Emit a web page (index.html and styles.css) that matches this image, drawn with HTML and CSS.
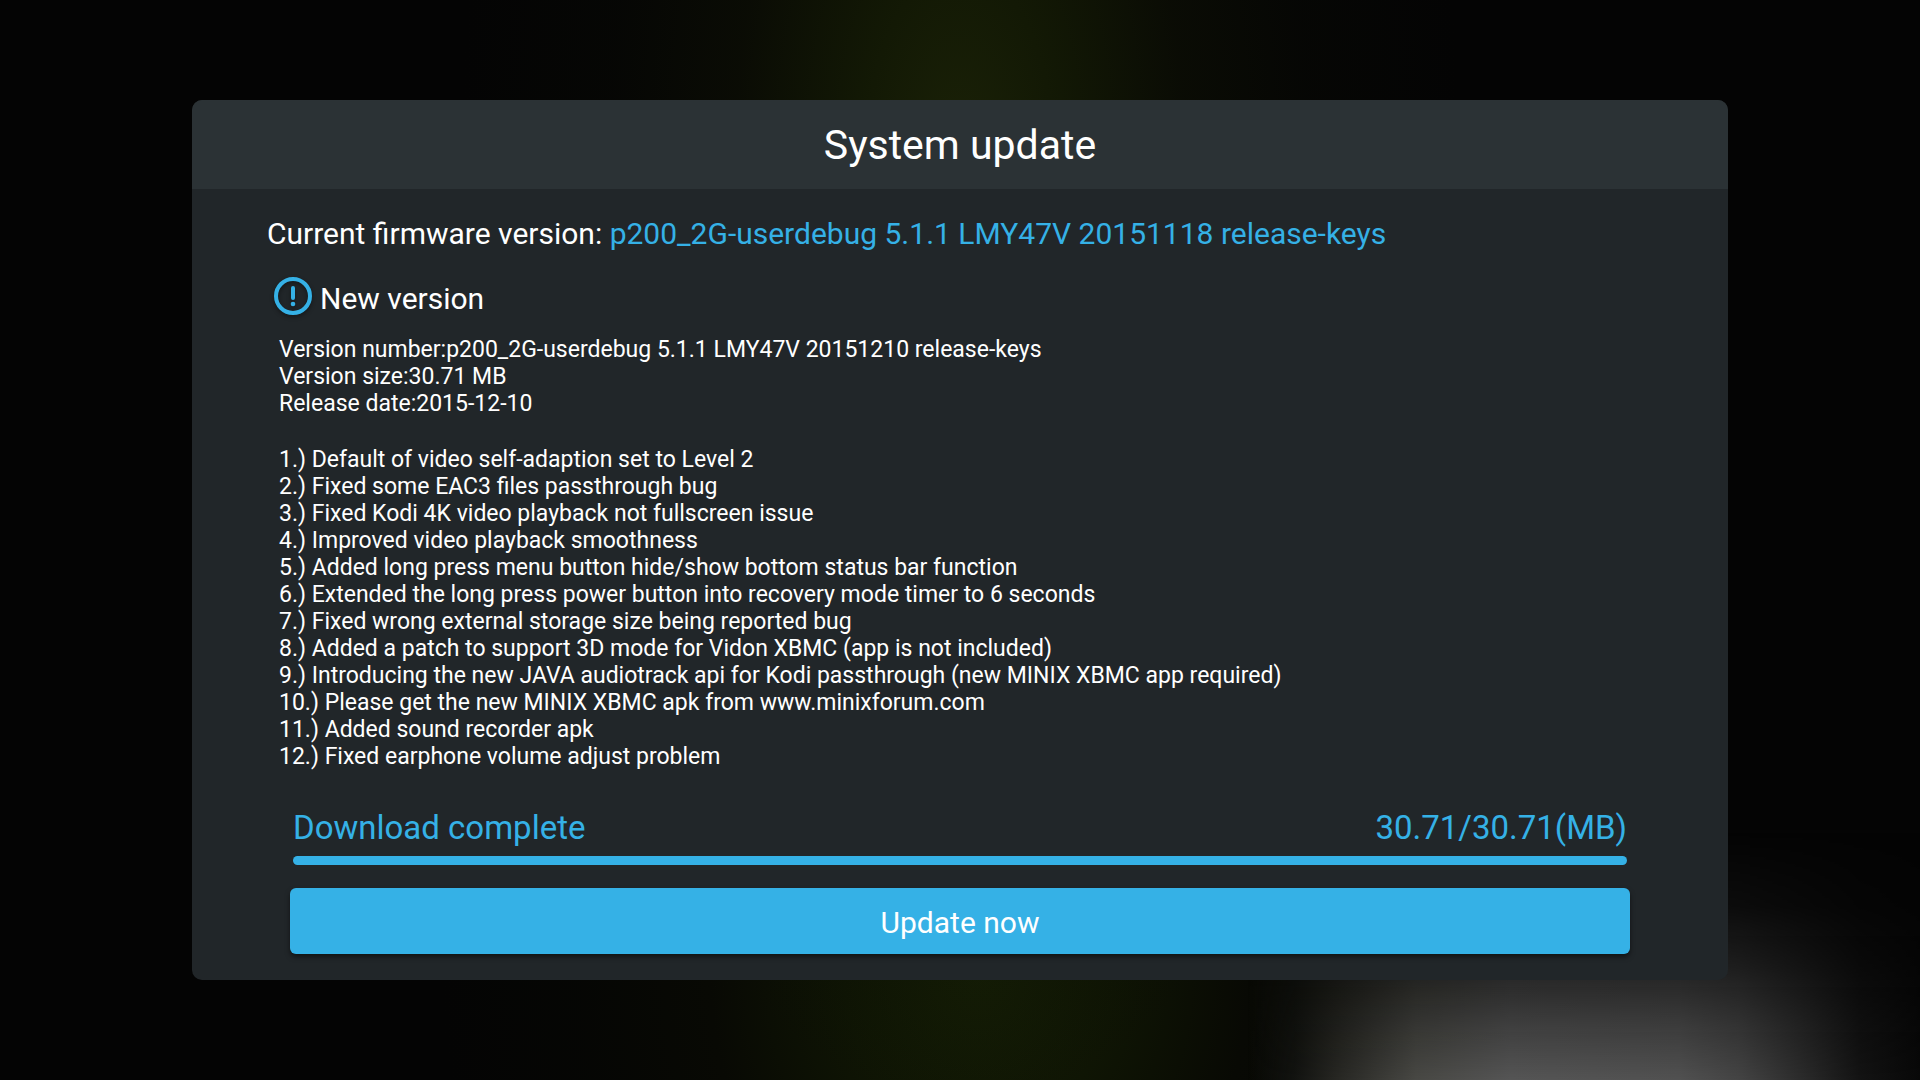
FILE: index.html
```html
<!DOCTYPE html>
<html lang="en">
<head>
<meta charset="utf-8">
<meta name="viewport" content="width=device-width, initial-scale=1">
<title>System update</title>
<link rel="stylesheet" href="styles.css">
</head>
<body>
<main class="dialog">
  <header class="dialog-header">
    <h1 class="dialog-title">System update</h1>
  </header>
  <div class="dialog-body">
    <p class="firmware">Current firmware version: <span class="accent">p200_2G-userdebug 5.1.1 LMY47V 20151118 release-keys</span></p>
    <h2 class="new-version">
      <svg class="alert-icon" viewBox="0 0 38 38" aria-hidden="true">
        <circle cx="19" cy="19" r="17" fill="none" stroke="currentColor" stroke-width="4"/>
        <rect x="17" y="9" width="4" height="14" rx="2" fill="currentColor"/>
        <circle cx="19" cy="27" r="2.3" fill="currentColor"/>
      </svg>
      <span>New version</span>
    </h2>
    <div class="notes">
      <p class="release">Version number:p200_2G-userdebug 5.1.1 LMY47V 20151210 release-keys<br>Version size:30.71 MB<br>Release date:2015-12-10</p>
      <ul class="changes">
        <li>1.) Default of video self-adaption set to Level 2</li>
        <li>2.) Fixed some EAC3 files passthrough bug</li>
        <li>3.) Fixed Kodi 4K video playback not fullscreen issue</li>
        <li>4.) Improved video playback smoothness</li>
        <li>5.) Added long press menu button hide/show bottom status bar function</li>
        <li>6.) Extended the long press power button into recovery mode timer to 6 seconds</li>
        <li>7.) Fixed wrong external storage size being reported bug</li>
        <li>8.) Added a patch to support 3D mode for Vidon XBMC (app is not included)</li>
        <li>9.) Introducing the new JAVA audiotrack api for Kodi passthrough (new MINIX XBMC app required)</li>
        <li>10.) Please get the new MINIX XBMC apk from www.minixforum.com</li>
        <li>11.) Added sound recorder apk</li>
        <li>12.) Fixed earphone volume adjust problem</li>
      </ul>
    </div>
  </div>
  <footer class="dialog-footer">
    <div class="download">
      <div class="download-status">
        <label for="download-progress">Download complete</label>
        <span>30.71/30.71(MB)</span>
      </div>
      <progress class="download-bar" id="download-progress" max="30.71" value="30.71"></progress>
    </div>
    <button class="update-button" type="button">Update now</button>
  </footer>
</main>
</body>
</html>
```
FILE: styles.css
```css
:root {
  --accent: #35b1e6;
}

* {
  box-sizing: border-box;
}

body {
  position: relative;
  z-index: 0;
  margin: 0;
  min-height: 100vh;
  display: flex;
  align-items: center;
  justify-content: center;
  font-family: Roboto, "Liberation Sans", sans-serif;
  color: #fff;
  background:
    radial-gradient(ellipse 26% 90% at 50% 14%, #1a2107, rgba(21, 28, 5, 0.85) 20%, rgba(15, 18, 5, 0.55) 45%, rgba(10, 12, 5, 0.3) 70%, transparent),
    radial-gradient(ellipse 28% 60% at 51% 90%, #151e05, rgba(17, 24, 4, 0.85) 25%, rgba(12, 14, 4, 0.5) 50%, rgba(8, 10, 4, 0.3) 75%, transparent),
    #040404;
}

/* soft light in the lower right corner of the backdrop */
body::before {
  content: "";
  position: absolute;
  z-index: -1;
  left: 65%;
  right: 0;
  bottom: 0;
  height: 23%;
  background: linear-gradient(to right, transparent, #121310 7%, #262622 13%, #484844 25%, #555 39%, #515151 64%, #444 73%, #2c2c2c 82%, #131313 91%, #080808);
  mask-image: linear-gradient(to top, #000, rgba(0, 0, 0, 0.72) 22%, rgba(0, 0, 0, 0.4) 45%, rgba(0, 0, 0, 0.12) 70%, transparent);
}

h1,
h2,
p,
ul {
  margin: 0;
  padding: 0;
  font-weight: 400;
}

.accent {
  color: var(--accent);
}

.dialog {
  width: 80%;
  border-radius: 10px;
  overflow: hidden;
  background: #212629;
}

.dialog-header {
  padding: 21px 20px 19px;
  background: #2b3235;
  text-align: center;
}

.dialog-title {
  font-size: 41px;
  line-height: 49px;
}

.dialog-body {
  padding: 27px 75px 0;
}

.firmware {
  font-size: 30px;
  line-height: 36px;
}

.new-version {
  display: flex;
  align-items: flex-start;
  gap: 8px;
  margin-top: 25px;
  padding-left: 7px;
  font-size: 30px;
  line-height: 44px;
}

.alert-icon {
  width: 38px;
  height: 38px;
  color: var(--accent);
  filter: drop-shadow(0 2px 2px rgba(0, 0, 0, 0.4));
}

.notes {
  padding: 15px 12px 0;
  font-size: 23px;
  line-height: 27px;
}

.changes {
  margin-top: 29px;
  list-style: none;
}

.dialog-footer {
  padding: 38px 98px 26px;
}

.download {
  padding: 0 3px;
}

.download-status {
  display: flex;
  justify-content: space-between;
  font-size: 33px;
  line-height: 40px;
  color: var(--accent);
}

.download-bar {
  display: block;
  width: 100%;
  height: 9px;
  margin-top: 8px;
  border: 0;
  border-radius: 5px;
  overflow: hidden;
  appearance: none;
  background: #15191b;
}

.download-bar::-webkit-progress-bar {
  background: #15191b;
}

.download-bar::-webkit-progress-value {
  background: var(--accent);
}

.update-button {
  display: block;
  width: 100%;
  margin-top: 23px;
  padding: 17px 15px 13px;
  border: 0;
  border-radius: 6px;
  font: inherit;
  font-size: 30px;
  line-height: 36px;
  color: #fff;
  background: var(--accent);
  box-shadow: 0 3px 5px rgba(0, 0, 0, 0.5);
}
```
